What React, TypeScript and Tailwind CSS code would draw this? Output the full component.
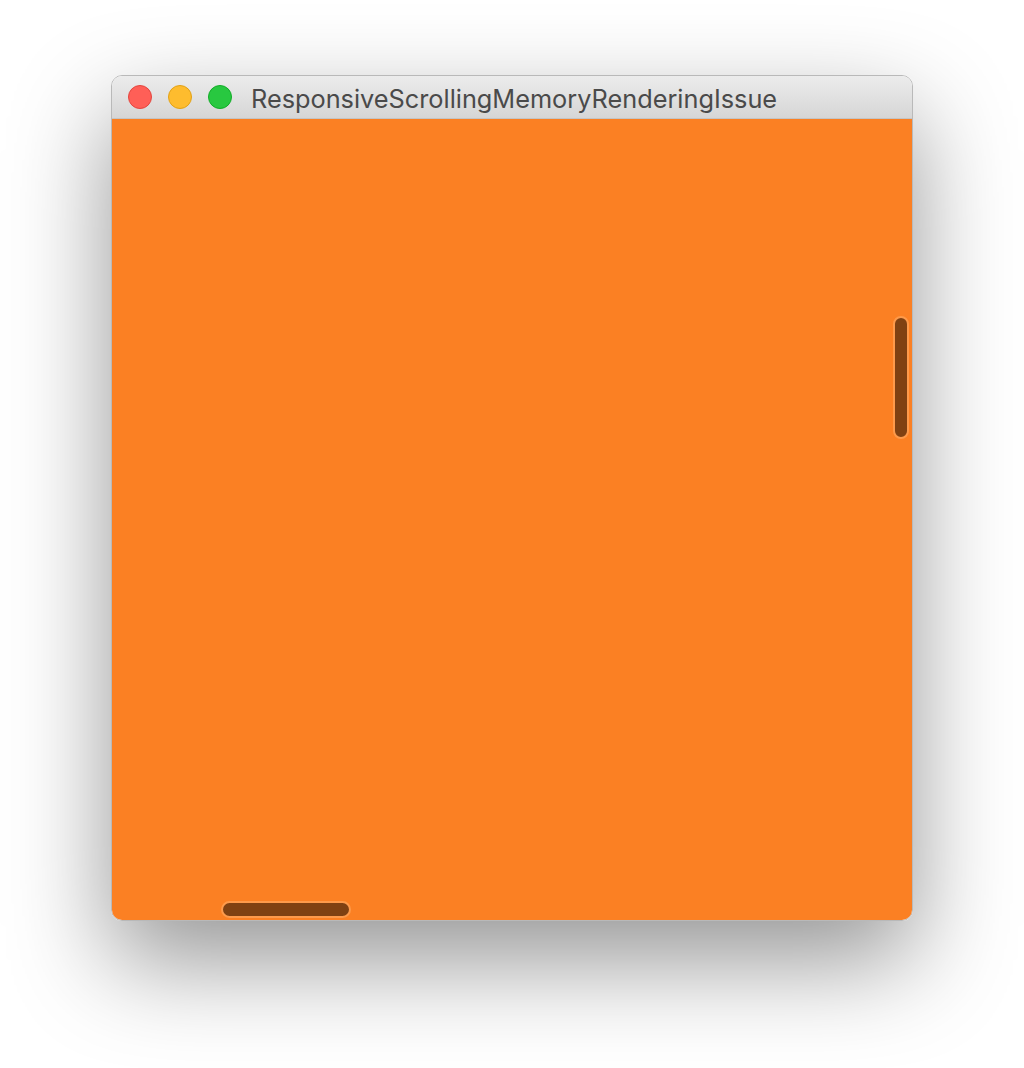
export default function App() {
  return (
    <div className="min-h-[1068px] w-[1024px] bg-white pl-[111px] pt-[75px]">
      {/* window */}
      <div className="w-[802px] overflow-hidden rounded-[11px] border border-[#b9b9b9] shadow-[0_40px_100px_rgba(0,0,0,0.42)]">
        {/* title bar */}
        <div className="flex h-[43px] items-center border-b border-[#c4c4c4] bg-gradient-to-b from-[#ececec] to-[#d6d6d6] pl-[16px]">
          <div className="flex gap-[16px]">
            <span className="h-[24px] w-[24px] rounded-full border border-[#e2463f] bg-[#ff5f57]" />
            <span className="h-[24px] w-[24px] rounded-full border border-[#e1a116] bg-[#febc2e]" />
            <span className="h-[24px] w-[24px] rounded-full border border-[#12ac28] bg-[#28c840]" />
          </div>
          <span className="ml-[19px] mt-[3px] font-['Inter','Liberation_Sans',sans-serif] text-[25.3px] leading-none text-[#4a4a4a]">
            ResponsiveScrollingMemoryRenderingIssue
          </span>
        </div>
        {/* content */}
        <div className="relative h-[801px] bg-[#fb8023]">
          <div className="absolute right-[3px] top-[197px] h-[123px] w-[16px] rounded-full border-2 border-[#fd9a4b] bg-[#7f4112]" />
          <div className="absolute bottom-[2px] left-[109px] h-[17px] w-[130px] rounded-full border-2 border-[#fd9a4b] bg-[#7f4112]" />
        </div>
      </div>
    </div>
  );
}
